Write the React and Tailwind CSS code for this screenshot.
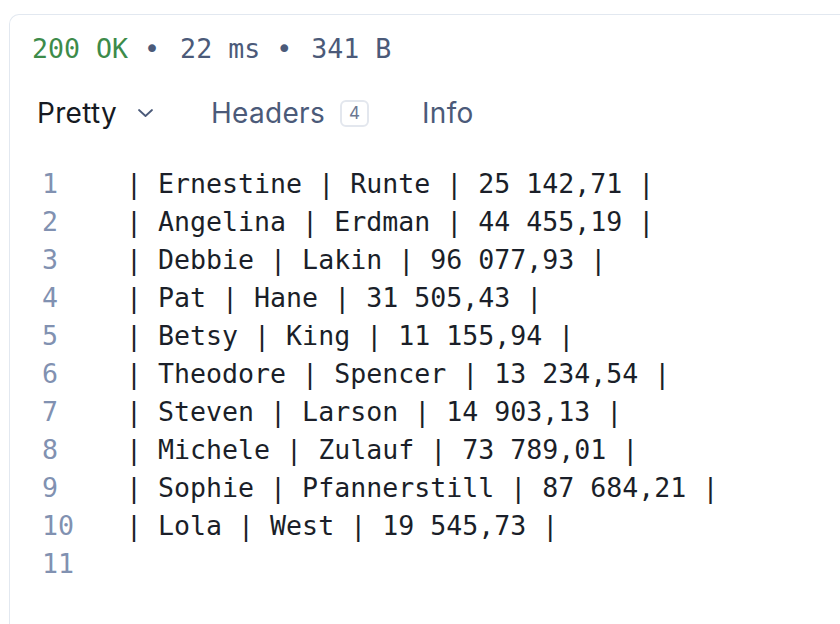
import React from "react";

const rows = [
  "| Ernestine | Runte | 25 142,71 |",
  "| Angelina | Erdman | 44 455,19 |",
  "| Debbie | Lakin | 96 077,93 |",
  "| Pat | Hane | 31 505,43 |",
  "| Betsy | King | 11 155,94 |",
  "| Theodore | Spencer | 13 234,54 |",
  "| Steven | Larson | 14 903,13 |",
  "| Michele | Zulauf | 73 789,01 |",
  "| Sophie | Pfannerstill | 87 684,21 |",
  "| Lola | West | 19 545,73 |",
  "",
];

const mono = { fontFamily: '"DejaVu Sans Mono", "Liberation Mono", monospace' };

export default function App() {
  return (
    <div className="w-[840px] h-[624px] overflow-hidden bg-white pl-[9px] pt-[14px]">
      <div className="h-[700px] w-[900px] rounded-tl-[10px] border-l border-t border-[#e2e8f0] pl-[22px] pt-[15px]">
        <div className="flex h-[38px] items-center text-[26.6px] leading-[38px] whitespace-pre" style={mono}>
          <span className="text-[#3d8b4a]">200 OK</span>
          <span className="text-[#4b5a79]"> •</span>
          <span className="ml-[4px] text-[#4b5a79]"> 22 ms •</span>
          <span className="ml-[3px] text-[#4b5a79]"> 341 B</span>
        </div>
        <div
          className="mt-[26px] flex h-[38px] items-center text-[28px] leading-[38px] tracking-[0.3px]"
          style={{ fontFamily: 'Inter, "Noto Sans", sans-serif' }}
        >
          <span className="ml-[5px] w-[100px] shrink-0 whitespace-nowrap text-[#161a22]">Pretty</span>
          <svg className="shrink-0" width="17" height="10" viewBox="0 0 17 10" fill="none">
            <path d="M2 2 L8.5 8 L15 2" stroke="#4b5a79" strokeWidth="1.8" strokeLinecap="round" strokeLinejoin="round" />
          </svg>
          <span className="ml-[57px] w-[129px] shrink-0 whitespace-nowrap text-[#4b5a79]">Headers</span>
          <span className="flex h-[27px] w-[29px] shrink-0 items-center justify-center rounded-[6px] border-2 border-[#e3e7ee] text-[17px] leading-none tracking-normal text-[#6b7892]">
            4
          </span>
          <span className="ml-[53px] whitespace-nowrap text-[#4b5a79]">Info</span>
        </div>
        <div className="mt-[33px] text-[26.6px] leading-[38px]" style={mono}>
          {rows.map((r, i) => (
            <div key={i} className="flex h-[38px] whitespace-pre">
              <span className="ml-[10px] w-[84px] text-[#8191b1]">{i + 1}</span>
              <span className="text-[#1b1f29]">{r}</span>
            </div>
          ))}
        </div>
      </div>
    </div>
  );
}
